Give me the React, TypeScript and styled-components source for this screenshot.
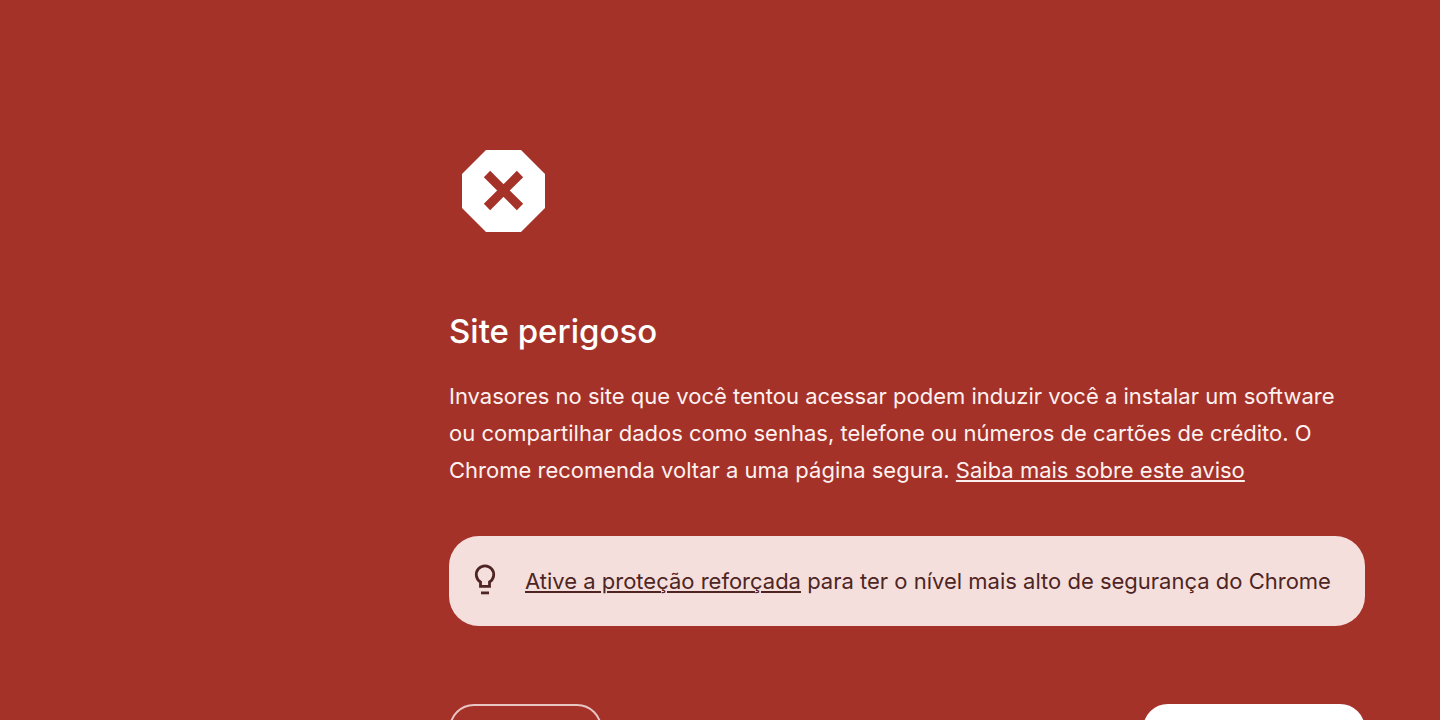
import React from 'react';
import styled, { createGlobalStyle } from 'styled-components';

const Global = createGlobalStyle`
  * { box-sizing: border-box; }
  body {
    margin: 0;
    background: #a53229;
    color: #fdf1f0;
    font-family: Inter, "Liberation Sans", sans-serif;
  }
`;

const Page = styled.main`
  height: 100vh;
  overflow: hidden;
  padding: 136px 75px 0 449px;
`;

const WarningIcon = styled.svg`
  display: block;
  width: 110px;
  height: 110px;
`;

const Title = styled.h1`
  margin: 64px 0 0;
  color: #fff;
  font-size: 33px;
  line-height: 42px;
  font-weight: 500;
`;

const Message = styled.p`
  margin: 26px 0 0;
  font-size: 22px;
  line-height: 37px;
`;

const TextLink = styled.a`
  color: inherit;
  text-decoration: underline;
  text-decoration-thickness: 2px;
  text-underline-offset: 2px;
`;

const Tip = styled.section`
  display: flex;
  align-items: center;
  gap: 22px;
  min-height: 90px;
  margin-top: 47px;
  padding: 0 19px;
  border-radius: 30px;
  background: #f5dfdd;
  color: #4e2523;
`;

const BulbIcon = styled.svg`
  flex: none;
  width: 35px;
  height: 36px;
`;

const TipText = styled.p`
  margin: 0;
  font-size: 22px;
  line-height: 37px;
`;

const Actions = styled.div`
  display: flex;
  justify-content: space-between;
  margin-top: 78px;
`;

const Button = styled.button<{ $filled?: boolean }>`
  height: 50px;
  padding: 0 ${p => (p.$filled ? 20 : 33)}px;
  border: 2px solid ${p => (p.$filled ? '#fff' : '#e8c6c3')};
  border-radius: 25px;
  background: ${p => (p.$filled ? '#fff' : 'transparent')};
  color: ${p => (p.$filled ? '#a53229' : '#fff')};
  font-family: inherit;
  font-size: 20px;
  line-height: 30px;
`;

export default function App() {
  return (
    <>
      <Global />
      <Page>
        <WarningIcon viewBox="0 0 110 110" aria-hidden="true">
          <path fill="#fff" d="M37 14H72L96 38V72L72 96H37L13 72V38Z" />
          <path stroke="#a53229" strokeWidth="9" d="M38 38L71 71M71 38L38 71" />
        </WarningIcon>
        <Title>Site perigoso</Title>
        <Message>
          Invasores no site que você tentou acessar podem induzir você a instalar um software
          ou compartilhar dados como senhas, telefone ou números de cartões de crédito. O
          Chrome recomenda voltar a uma página segura. <TextLink href="#">Saiba mais sobre este aviso</TextLink>
        </Message>
        <Tip>
          <BulbIcon viewBox="0 0 35 36" fill="none" stroke="currentColor" aria-hidden="true">
            <path strokeWidth="2.8" d="M12.5 23.4V19A8.7 8.7 0 1 1 21.5 19V23.4Z" />
            <path strokeWidth="2.8" d="M13 29.9H21" />
          </BulbIcon>
          <TipText>
            <TextLink href="#">Ative a proteção reforçada</TextLink> para ter o nível mais alto de segurança do Chrome
          </TipText>
        </Tip>
        <Actions>
          <Button type="button">Detalhes</Button>
          <Button type="button" $filled>Voltar à segurança</Button>
        </Actions>
      </Page>
    </>
  );
}
